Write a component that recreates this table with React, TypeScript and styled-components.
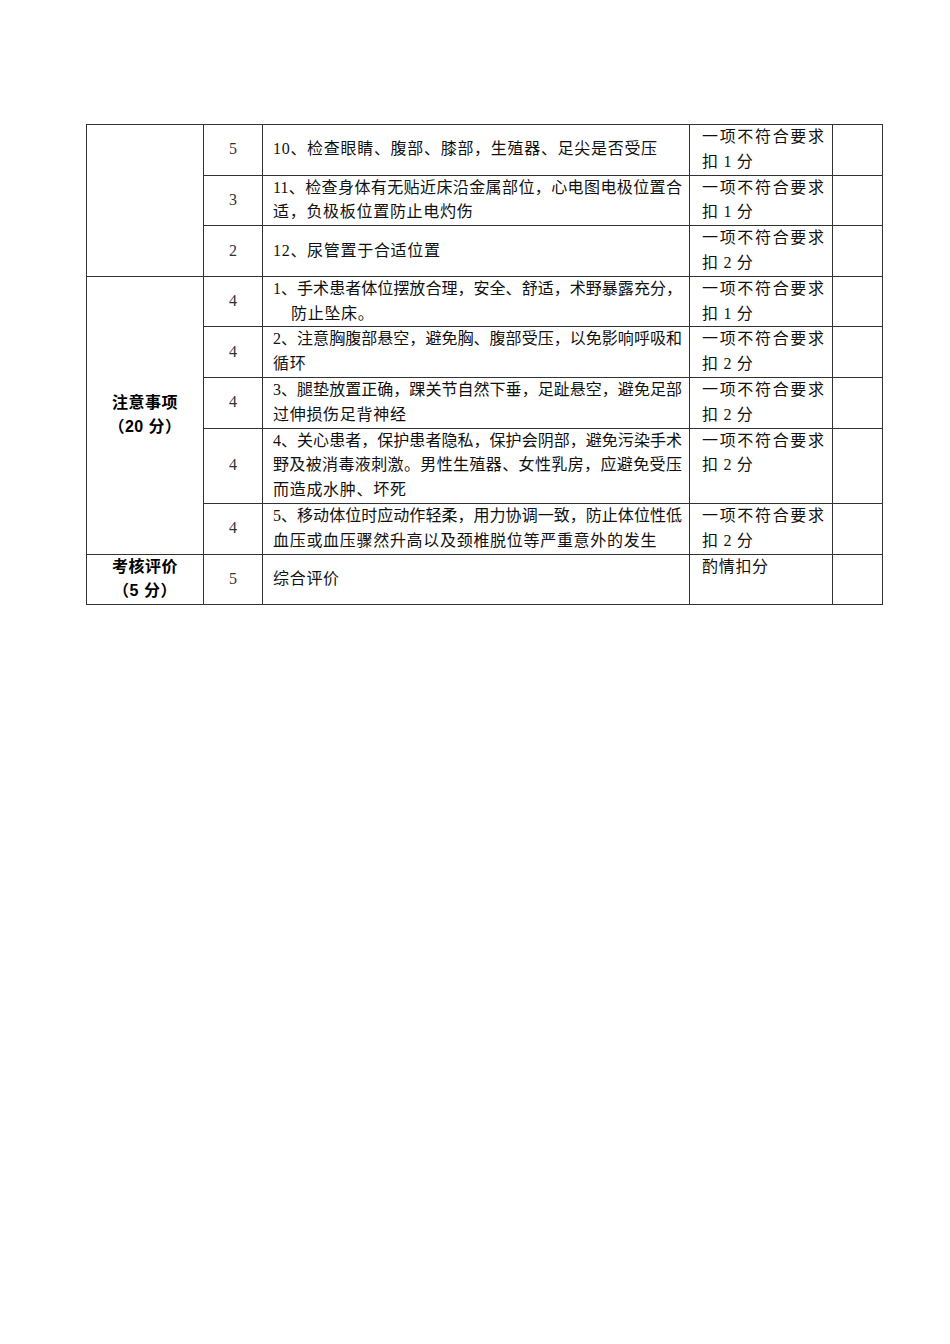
import React from "react";
import styled, { createGlobalStyle } from "styled-components";

const GlobalStyle = createGlobalStyle`
  html, body {
    margin: 0;
    padding: 0;
    background: #ffffff;
  }
`;

const Page = styled.div`
  min-height: 1344px;
  padding: 124px 0 0 86px;
  box-sizing: border-box;
  font-family: "Liberation Serif", "Noto Sans CJK SC", serif;
  color: #111;
`;

const Sheet = styled.table`
  border-collapse: collapse;
  table-layout: fixed;
  width: 796px;
`;

const Cell = styled.td<{ $align?: "top" | "middle" }>`
  border: 1px solid #333;
  padding: 0;
  vertical-align: ${(p) => p.$align || "middle"};
  font-size: 16px;
  line-height: 24.8px;
`;

const Category = styled(Cell)`
  text-align: center;
  font-family: "Liberation Sans", "Noto Sans CJK SC", sans-serif;
  font-weight: 700;
  line-height: 24px;
  letter-spacing: 0.5px;
  color: #000;
`;

const Score = styled(Cell)`
  text-align: center;
  color: #333;
`;

const Content = styled(Cell)`
  padding: 0 7px 0 10px;
`;

const Deduct = styled(Cell)`
  padding: 0 8px 0 12px;
`;

const Line = styled.div<{ $fill?: boolean; $indent?: boolean }>`
  white-space: nowrap;
  text-align: ${(p) => (p.$fill ? "justify" : "left")};
  text-align-last: ${(p) => (p.$fill ? "justify" : "left")};
  letter-spacing: ${(p) => (p.$fill ? "0" : "0.7px")};
  padding-left: ${(p) => (p.$indent ? "18px" : "0")};
`;

type Row = {
  score: string;
  lines: { text: string; indent?: boolean }[];
  deduct: string[];
};

const groupA: Row[] = [
  {
    score: "5",
    lines: [{ text: "10、检查眼睛、腹部、膝部，生殖器、足尖是否受压" }],
    deduct: ["一项不符合要求", "扣 1 分"],
  },
  {
    score: "3",
    lines: [
      { text: "11、检查身体有无贴近床沿金属部位，心电图电极位置合" },
      { text: "适，负极板位置防止电灼伤" },
    ],
    deduct: ["一项不符合要求", "扣 1 分"],
  },
  {
    score: "2",
    lines: [{ text: "12、尿管置于合适位置" }],
    deduct: ["一项不符合要求", "扣 2 分"],
  },
];

const groupB: Row[] = [
  {
    score: "4",
    lines: [
      { text: "1、手术患者体位摆放合理，安全、舒适，术野暴露充分，" },
      { text: "防止坠床。", indent: true },
    ],
    deduct: ["一项不符合要求", "扣 1 分"],
  },
  {
    score: "4",
    lines: [
      { text: "2、注意胸腹部悬空，避免胸、腹部受压，以免影响呼吸和" },
      { text: "循环" },
    ],
    deduct: ["一项不符合要求", "扣 2 分"],
  },
  {
    score: "4",
    lines: [
      { text: "3、腿垫放置正确，踝关节自然下垂，足趾悬空，避免足部" },
      { text: "过伸损伤足背神经" },
    ],
    deduct: ["一项不符合要求", "扣 2 分"],
  },
  {
    score: "4",
    lines: [
      { text: "4、关心患者，保护患者隐私，保护会阴部，避免污染手术" },
      { text: "野及被消毒液刺激。男性生殖器、女性乳房，应避免受压" },
      { text: "而造成水肿、坏死" },
    ],
    deduct: ["一项不符合要求", "扣 2 分"],
  },
  {
    score: "4",
    lines: [
      { text: "5、移动体位时应动作轻柔，用力协调一致，防止体位性低" },
      { text: "血压或血压骤然升高以及颈椎脱位等严重意外的发生" },
    ],
    deduct: ["一项不符合要求", "扣 2 分"],
  },
];

const RowCells = ({ row }: { row: Row }) => (
  <>
    <Score>{row.score}</Score>
    <Content>
      {row.lines.map((l, i) => (
        <Line key={i} $fill={i < row.lines.length - 1} $indent={l.indent}>
          {l.text}
        </Line>
      ))}
    </Content>
    <Deduct $align="top">
      {row.deduct.map((d, i) => (
        <Line key={i} $fill={i < row.deduct.length - 1}>
          {d}
        </Line>
      ))}
    </Deduct>
    <Cell />
  </>
);

const App = () => {
  return (
    <Page>
      <GlobalStyle />
      <Sheet>
        <colgroup>
          <col style={{ width: 117 }} />
          <col style={{ width: 59 }} />
          <col style={{ width: 427 }} />
          <col style={{ width: 143 }} />
          <col style={{ width: 50 }} />
        </colgroup>
        <tbody>
          {groupA.map((row, i) => (
            <tr key={"a" + i}>
              {i === 0 && <Cell rowSpan={groupA.length} />}
              <RowCells row={row} />
            </tr>
          ))}
          {groupB.map((row, i) => (
            <tr key={"b" + i}>
              {i === 0 && (
                <Category rowSpan={groupB.length}>
                  <div>注意事项</div>
                  <div>（20 分）</div>
                </Category>
              )}
              <RowCells row={row} />
            </tr>
          ))}
          <tr>
            <Category>
              <div>考核评价</div>
              <div>（5 分）</div>
            </Category>
            <Score>5</Score>
            <Content>
              <Line>综合评价</Line>
            </Content>
            <Deduct $align="top">
              <Line>酌情扣分</Line>
              <Line>&nbsp;</Line>
            </Deduct>
            <Cell />
          </tr>
        </tbody>
      </Sheet>
    </Page>
  );
};

export default App;
